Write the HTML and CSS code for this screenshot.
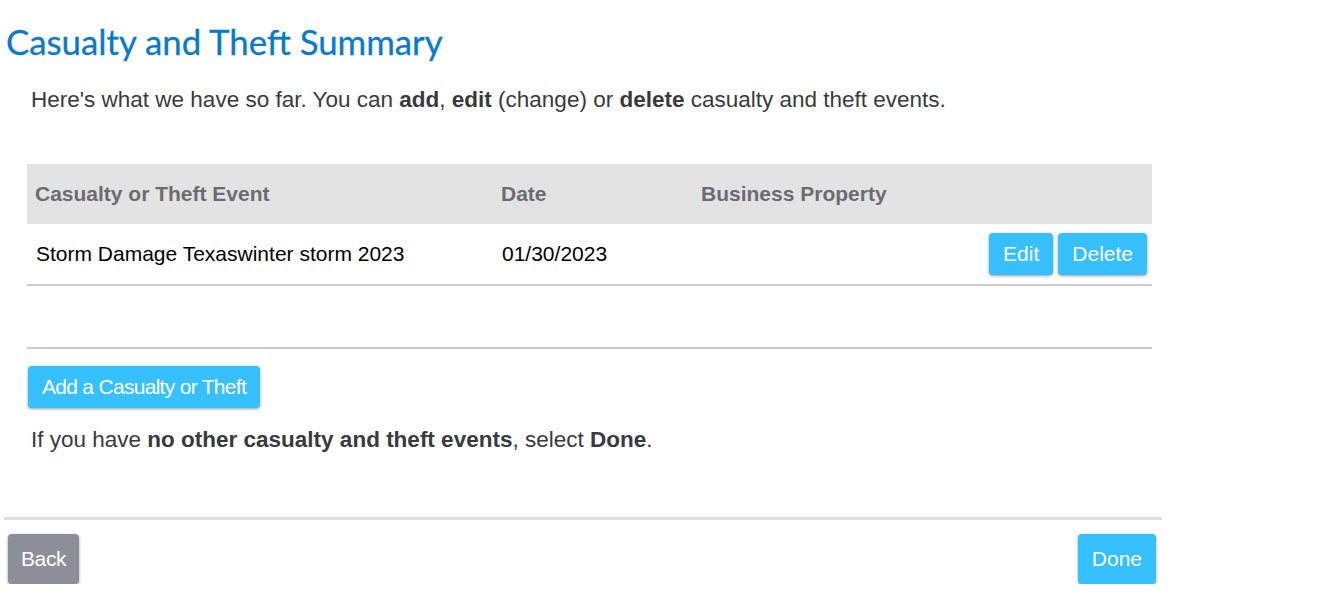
FILE: index.html
```html
<!DOCTYPE html>
<html>
<head>
<meta charset="utf-8">
<link rel="stylesheet" href="styles.css">
</head>
<body>
<div class="page">
  <h1 class="title">Casualty and Theft Summary</h1>
  <div class="content">
    <p class="intro">Here's what we have so far. You can <b>add</b>, <b>edit</b> (change) or <b>delete</b> casualty and theft events.</p>
    <div class="table">
      <div class="thead">
        <div class="c1">Casualty or Theft Event</div>
        <div class="c2">Date</div>
        <div class="c3">Business Property</div>
        <div class="c4"></div>
      </div>
      <div class="trow">
        <div class="c1">Storm Damage Texaswinter storm 2023</div>
        <div class="c2">01/30/2023</div>
        <div class="c3"></div>
        <div class="c4 actions"><button class="btn btn-blue btn-sm">Edit</button><button class="btn btn-blue btn-sm">Delete</button></div>
      </div>
      <div class="spacer"></div>
    </div>
    <button class="btn btn-blue btn-add">Add a Casualty or Theft</button>
    <p class="outro">If you have <b>no other casualty and theft events</b>, select <b>Done</b>.</p>
  </div>
  <div class="footer">
    <button class="btn btn-gray btn-lg btn-back">Back</button>
    <button class="btn btn-blue btn-lg">Done</button>
  </div>
</div>
</body>
</html>
```

FILE: styles.css
```css
html, body {
  margin: 0;
  padding: 0;
  background: #fff;
}
body {
  font-family: "Liberation Sans", Arial, sans-serif;
  color: #393a3d;
}
.page {
  width: 1162px;
  padding-top: 22px;
}
.title {
  margin: 0 0 0 6px;
  font-family: Lato, "Open Sans", sans-serif;
  font-weight: 400;
  font-size: 34.8px;
  line-height: 40px;
  color: #0a7ac7;
  -webkit-text-stroke: 0.3px #0a7ac7;
}
.content {
  padding-left: 27px;
  width: 1125px;
}
.intro {
  margin: 25px 0 0 4px;
  font-size: 22.5px;
  line-height: 26px;
}
.table {
  margin-top: 51px;
}
.thead, .trow {
  display: grid;
  grid-template-columns: 474px 200px 1fr auto;
  align-items: center;
}
.thead {
  height: 60px;
  background: #e3e3e3;
  font-weight: 700;
  font-size: 21px;
  color: #6b6c72;
}
.thead .c1 { padding-left: 8px; }
.trow {
  height: 60px;
  border-bottom: 2px solid #cccccc;
  font-size: 21px;
  color: #000;
}
.trow .c1 { padding-left: 9px; }
.trow .c2 { padding-left: 1px; }
.actions {
  display: flex;
  gap: 5px;
  padding-right: 5px;
}
.spacer {
  height: 61px;
  border-bottom: 2px solid #cccccc;
}
.btn {
  font-family: "Liberation Sans", Arial, sans-serif;
  border: none;
  border-radius: 4px;
  color: #fff;
  box-shadow: 0 1px 3px rgba(0,0,0,0.4);
  cursor: pointer;
  padding: 0;
}
.btn-blue { background: #37c0fe; }
.btn-gray { background: #8d8f98; }
.btn-sm {
  height: 42px;
  font-size: 21px;
  padding: 0 14px;
}
.btn-add {
  margin-top: 17px;
  margin-left: 1px;
  height: 42px;
  width: 232px;
  font-size: 21px;
  letter-spacing: -0.7px;
}
.outro {
  margin: 19px 0 0 4px;
  font-size: 22.5px;
  line-height: 26px;
}
.footer {
  margin-top: 64px;
  margin-left: 4px;
  border-top: 3px solid #e0e0e0;
  padding: 14px 6px 0 4px;
  display: flex;
  justify-content: space-between;
}
.btn-lg {
  height: 50px;
  font-size: 21px;
  padding: 0 14px;
}
.btn-back {
  padding: 0 13px;
  letter-spacing: -0.4px;
}
```
